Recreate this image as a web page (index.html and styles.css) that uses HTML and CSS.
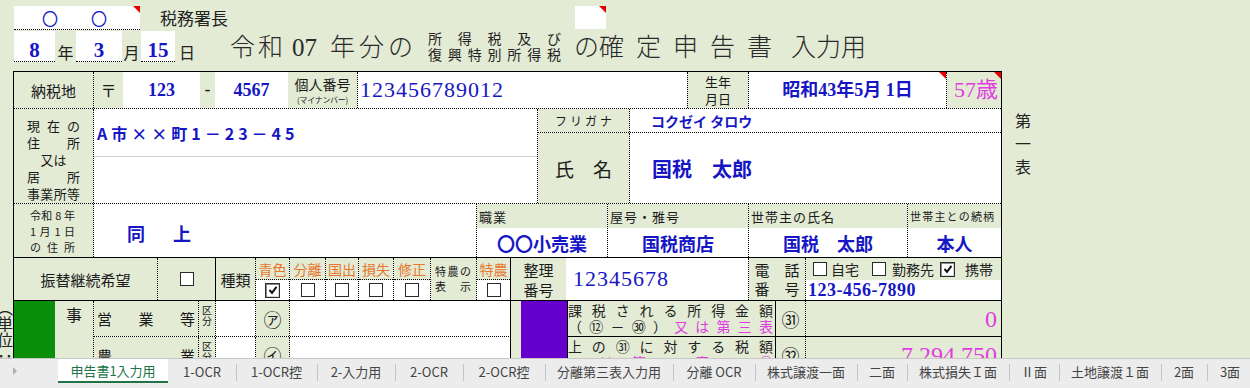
FILE: index.html
```html
<!DOCTYPE html>
<html lang="ja">
<head>
<meta charset="utf-8">
<title>確定申告書 入力用</title>
<link rel="stylesheet" href="styles.css">
</head>
<body>
<div class="screen">
  <header class="head">
    <div class="head-r1">
      <div class="inp office"><span>〇</span><span>〇</span><i class="tri"></i></div>
      <div class="chief">税務署長</div>
      <div class="inp memo"><i class="tri"></i></div>
    </div>
    <div class="head-r2">
      <div class="inp dnum d-yy">8</div><span class="du du-y">年</span>
      <div class="inp dnum d-mm">3</div><span class="du du-m">月</span>
      <div class="inp dnum d-dd">15</div><span class="du du-d">日</span>
      <h1 class="title">
        <span class="t-a">令和</span><span class="t-num">07</span><span class="t-b">年分の</span>
        <span class="t-small"><span class="ts">所得税及び</span><span class="ts">復興特別所得税</span></span>
        <span class="t-c">の</span><span class="t-e">確定申告書</span><span class="t-d">入力用</span>
      </h1>
    </div>
  </header>

  <div class="main">
    <div class="unit-strip"><span class="unit">（単位：円）</span></div>

    <div class="form">
      <div class="row r1">
        <div class="cell g dr c-nozei">納税地</div>
        <div class="cell g c-post">〒</div>
        <div class="cell w c-zip1 serif blue b">123</div>
        <div class="cell g c-dash">-</div>
        <div class="cell w c-zip2 serif blue b">4567</div>
        <div class="cell col g dr c-myl"><span class="my1">個人番号</span><span class="my2">(マイナンバー)</span></div>
        <div class="cell w c-my serif blue">123456789012</div>
        <div class="cell col g dl dr c-bl"><span>生年</span><span>月日</span></div>
        <div class="cell w dr c-bv serif blue b">昭和43年5月 1日<i class="tri"></i></div>
        <div class="cell g c-age serif">57歳<i class="tri"></i></div>
      </div>

      <div class="row r2">
        <div class="g dr c-lab5">
          <div class="jl">現在の</div>
          <div class="jl">住所</div>
          <div class="cl">又は</div>
          <div class="jl">居所</div>
          <div class="jl">事業所等</div>
        </div>
        <div class="w dr c-addr">
          <div class="addr1 blue b">A市××町1－23－45</div>
          <div class="addr2"></div>
        </div>
        <div class="c-namebox">
          <div class="kana-row">
            <div class="cell g dr c-kl">フリガナ</div>
            <div class="cell w c-kv blue b">コクゼイ タロウ</div>
          </div>
          <div class="name-row">
            <div class="cell g dr c-nl">氏　名</div>
            <div class="cell w c-nv blue b">国税　太郎</div>
          </div>
        </div>
      </div>

      <div class="row r3">
        <div class="g dr c-lab3">
          <div class="jl3">令和 8 年</div>
          <div class="jl3">1 月 1 日</div>
          <div class="jl3">の 住 所</div>
        </div>
        <div class="w dr c-same blue b">同　上</div>
        <div class="icol dr i1"><div class="ihead">職業</div><div class="ival blue b">〇〇小売業</div></div>
        <div class="icol dr i2"><div class="ihead">屋号・雅号</div><div class="ival blue b">国税商店</div></div>
        <div class="icol dr i3"><div class="ihead">世帯主の氏名</div><div class="ival blue b">国税　太郎</div></div>
        <div class="icol i4"><div class="ihead ihead-s">世帯主との続柄</div><div class="ival blue b">本人</div></div>
      </div>

      <div class="row r4">
        <div class="cell g dr c-furi">振替継続希望</div>
        <div class="cell g sr c-furicb"><span class="cb"></span></div>
        <div class="cell g dr c-kind">種類</div>
        <div class="kcol dr k1"><div class="khead">青色</div><div class="kbox"><span class="cb on"><svg viewBox="0 0 10 10" width="10" height="10"><polyline points="1.5,5 4,7.8 8.5,1.8" fill="none" stroke="#111" stroke-width="2"/></svg></span></div></div>
        <div class="kcol dr k2"><div class="khead">分離</div><div class="kbox"><span class="cb"></span></div></div>
        <div class="kcol dr k3"><div class="khead">国出</div><div class="kbox"><span class="cb"></span></div></div>
        <div class="kcol dr k4"><div class="khead">損失</div><div class="kbox"><span class="cb"></span></div></div>
        <div class="kcol dr k5"><div class="khead">修正</div><div class="kbox"><span class="cb"></span></div></div>
        <div class="g dr c-tokuhyo"><div class="jl4">特農の</div><div class="jl4">表示</div></div>
        <div class="kcol sr k6"><div class="khead">特農</div><div class="kbox"><span class="cb"></span></div></div>
        <div class="cell col g c-seiri"><span>整理</span><span>番号</span></div>
        <div class="cell w dr c-seirino serif blue">12345678</div>
        <div class="cell col g dr c-tel"><span>電　話</span><span>番　号</span></div>
        <div class="c-telv">
          <div class="tel-opts">
            <span class="cb"></span><span class="opt opt1">自宅</span>
            <span class="cb"></span><span class="opt opt2">勤務先</span>
            <span class="cb on"><svg viewBox="0 0 10 10" width="10" height="10"><polyline points="1.5,5 4,7.8 8.5,1.8" fill="none" stroke="#111" stroke-width="2"/></svg></span><span class="opt opt3">携帯</span>
          </div>
          <div class="tel-no serif blue b">123-456-7890</div>
        </div>
      </div>

      <div class="row r56">
        <div class="dkg"></div>
        <div class="g dr c-jigyo"><span>事</span><span>業</span></div>
        <div class="sub">
          <div class="srow">
            <div class="g dr c-item"><span class="jw">営業等</span></div>
            <div class="g dr c-kbn"><span>区</span><span>分</span></div>
            <div class="w dr c-kin"></div>
            <div class="cell g dr c-code">㋐</div>
            <div class="w sr c-amt"></div>
          </div>
          <div class="srow">
            <div class="g dr c-item"><span class="jw">農業</span></div>
            <div class="g dr c-kbn"><span>区</span><span>分</span></div>
            <div class="w dr c-kin"></div>
            <div class="cell g dr c-code">㋑</div>
            <div class="w sr c-amt"></div>
          </div>
        </div>
        <div class="g c-strip"></div>
        <div class="pur sr"></div>
        <div class="rgrp">
          <div class="rrow">
            <div class="g sr c-desc"><div class="jd">課税される所得金額</div><div class="jd">（⑫－㉚）<span class="mg">又は第三表</span></div></div>
            <div class="cell g dr c-no">㉛</div>
            <div class="g c-val serif mg">0</div>
          </div>
          <div class="rrow">
            <div class="g sr c-desc"><div class="jd">上の㉛に対する税額</div><div class="jd mg">又は第三表の⑯</div></div>
            <div class="cell g dr c-no">㉜</div>
            <div class="g c-val serif mg">7,294,750</div>
          </div>
        </div>
      </div>
    </div>

    <div class="side">第一表</div>
  </div>
</div>

<nav class="tabs">
  <span class="tab-nav"><i class="arrow"></i></span>
  <span class="tab active">申告書1入力用</span>
  <span class="tab tw68">1-OCR</span>
  <span class="tab tw81">1-OCR控</span>
  <span class="tab tw78">2-入力用</span>
  <span class="tab tw68">2-OCR</span>
  <span class="tab tw82">2-OCR控</span>
  <span class="tab tw128">分離第三表入力用</span>
  <span class="tab tw82">分離 OCR</span>
  <span class="tab tw102">株式譲渡一面</span>
  <span class="tab tw50">二面</span>
  <span class="tab tw102">株式損失Ｉ面</span>
  <span class="tab tw50">Ⅱ面</span>
  <span class="tab tw102">土地譲渡１面</span>
  <span class="tab tw46">2面</span>
  <span class="tab tw46">3面</span>
</nav>
</body>
</html>
```

FILE: styles.css
```css
* { box-sizing: border-box; margin: 0; padding: 0; }
html, body { width: 1250px; height: 388px; overflow: hidden; }
body {
  background: #e3ebd5;
  font-family: "Noto Sans CJK JP", "Noto Sans", sans-serif;
  color: #1a1a1a;
  font-size: 14px;
  line-height: 1;
}
.screen { height: 358px; overflow: hidden; }

.serif { font-family: "Liberation Serif", "Noto Sans CJK JP", serif; }
.blue { color: #1616c4; }
.mg { color: #e03ce0; }
.b { font-weight: bold; }

.tri {
  position: absolute; top: 0; right: 0; width: 0; height: 0;
  border-top: 7px solid #e80000; border-left: 7px solid transparent;
}

/* ---------- header ---------- */
.head-r1 { display: flex; padding-top: 6px; height: 30px; }
.inp { background: #fff; position: relative; }
.office {
  margin-left: 14px; width: 126px; height: 24px;
  border-bottom: 1px dotted #000;
  display: flex; align-items: center; padding-left: 28px; gap: 33px;
  color: #1616c4; font-size: 16px;
}
.chief { width: 435px; padding-left: 20px; font-size: 17px; padding-top: 3px; color: #222; }
.memo { width: 31px; height: 23px; }

.head-r2 { display: flex; align-items: flex-end; height: 32px; }
.dnum {
  height: 31px; border-bottom: 1px dotted #000;
  display: flex; align-items: center; justify-content: center;
  font-family: "Liberation Serif", serif; font-weight: bold; font-size: 21px; color: #1616c4;
  padding-top: 8px;
}
.d-yy { margin-left: 14px; width: 41px; }
.d-mm { width: 46px; }
.d-dd { width: 34px; }
.du { font-size: 16px; height: 31px; display: flex; align-items: center; padding-top: 10px; color: #222; }
.du-y { width: 21px; justify-content: center; }
.du-m { width: 19px; justify-content: center; }
.du-d { width: 25px; padding-left: 4px; }

.title {
  display: flex; align-items: flex-end; margin-left: 30px;
  font-family: "Liberation Serif", "Noto Sans CJK JP", serif;
  font-weight: 300; font-size: 25px; line-height: 29px; color: #2a2a2a;
  height: 32px;
}
.t-a { letter-spacing: 3px; }
.t-num { margin-left: 6px; font-weight: normal; }
.t-b { margin-left: 13px; letter-spacing: 4px; }
.t-small {
  display: flex; flex-direction: column; width: 133px; margin-left: 11px;
  font-size: 14px; line-height: 16px; font-family: "Noto Sans CJK JP", sans-serif; font-weight: normal;
  color: #222; align-self: flex-end;
}
.ts { display: block; text-align: justify; text-align-last: justify; }
.t-c { margin-left: 13px; }
.t-e { letter-spacing: 12px; }
.t-d { margin-left: 7px; }

/* ---------- main ---------- */
.main { display: flex; margin-top: 9px; }
.unit-strip { width: 13px; overflow: hidden; padding-top: 229px; }
.unit {
  display: block; writing-mode: vertical-rl; font-size: 16px; margin-left: -4px; width: 17px;
  color: #222;
}
.side {
  writing-mode: vertical-rl; font-size: 16px; letter-spacing: 7px;
  margin-left: 13px; padding-top: 42px; color: #222;
}

.form { width: 989px; border: 1px solid #000; background: #fff; flex-shrink: 0; }
.row { display: flex; }
.cell { display: flex; align-items: center; justify-content: center; position: relative; }
.col { flex-direction: column; }
.g { background: #e3ebd5; }
.w { background: #fff; }
.dr { border-right: 1px dotted #000; }
.dl { border-left: 1px dotted #000; }
.sr { border-right: 1px solid #000; }

/* row 1 */
.r1 { height: 37px; border-bottom: 1px dotted #000; }
.c-nozei { width: 80px; font-size: 15px; }
.c-post { width: 29px; font-size: 16px; }
.c-zip1 { width: 77px; font-size: 18px; }
.c-dash { width: 15px; font-family: "Liberation Sans", sans-serif; font-size: 18px; }
.c-zip2 { width: 73px; font-size: 18px; }
.c-myl { width: 70px; }
.my1 { font-size: 14px; }
.my2 { font-size: 8px; margin-top: 5px; letter-spacing: -0.3px; }
.c-my { width: 329px; justify-content: flex-start; padding-left: 2px; font-size: 22px; letter-spacing: 1px; }
.c-bl { width: 62px; font-size: 13px; gap: 4px; }
.c-bv { width: 198px; font-size: 18px; }
.c-age { width: 54px; justify-content: flex-end; padding-right: 3px; font-size: 22px; color: #e03ce0; }

/* row 2 */
.r2 { height: 95px; border-bottom: 1px dotted #000; }
.c-lab5 { width: 80px; padding: 8px 0 0 13px; font-size: 13px; line-height: 17px; }
.jl { width: 53px; white-space: nowrap; text-align: justify; text-align-last: justify; }
.cl { width: 53px; text-align: center; }
.c-addr { width: 444px; display: flex; flex-direction: column; }
.addr1 {
  height: 48px; border-bottom: 1px solid #d0d0d0;
  display: flex; align-items: center; padding-left: 3px;
  font-size: 16px; letter-spacing: 4px;
}
.c-namebox { width: 463px; display: flex; flex-direction: column; }
.kana-row { height: 24px; display: flex; border-bottom: 1px dotted #000; }
.c-kl { width: 92px; font-size: 12px; letter-spacing: 3px; padding-left: 3px; }
.c-kv { width: 371px; justify-content: flex-start; padding-left: 21px; font-size: 14px; }
.name-row { flex: 1; display: flex; }
.c-nl { width: 92px; font-size: 19px; }
.c-nv { width: 371px; justify-content: flex-start; padding-left: 22px; font-size: 20px; padding-top: 1px; }

/* row 3 */
.r3 { height: 54px; border-bottom: 1px solid #000; }
.c-lab3 { width: 80px; padding: 3px 0 0 16px; font-size: 11px; line-height: 16px; }
.jl3 { width: 45px; white-space: nowrap; text-align: justify; text-align-last: justify; }
.c-same {
  width: 383px; display: flex; align-items: center; padding: 4px 0 0 33px;
  font-size: 18px; letter-spacing: 5px;
}
.icol { display: flex; flex-direction: column; }
.i1 { width: 131px; }
.i2 { width: 141px; }
.i3 { width: 159px; }
.i4 { width: 93px; }
.ihead {
  height: 24px; background: #e3ebd5; font-size: 13px; letter-spacing: 1px;
  display: flex; align-items: center; padding-left: 2px; white-space: nowrap;
}
.ihead-s { font-size: 11px; letter-spacing: 1.2px; }
.ival { flex: 1; background: #fff; display: flex; align-items: center; justify-content: center; font-size: 18px; }

/* row 4 */
.r4 { height: 43px; border-bottom: 1px solid #000; }
.c-furi { width: 144px; font-size: 15px; }
.c-furicb { width: 58px; }
.c-kind { width: 40px; font-size: 15px; }
.kcol { display: flex; flex-direction: column; }
.k1 { width: 34px; }
.k2 { width: 36px; }
.k3 { width: 33px; }
.k4 { width: 35px; }
.k5 { width: 37px; }
.k6 { width: 34px; }
.khead {
  height: 22px; background: #e3ebd5; border-bottom: 1px dotted #000;
  display: flex; align-items: center; justify-content: center;
  font-size: 14px; color: #e8762d; white-space: nowrap;
}
.kbox { flex: 1; background: #fff; display: flex; align-items: center; justify-content: center; }
.cb {
  display: inline-flex; align-items: center; justify-content: center;
  width: 14px; height: 14px; border: 1px solid #2a2a2a; background: #fff; flex-shrink: 0;
}
.cb.on { width: 15px; height: 15px; box-shadow: inset 1px 1px 0 #8a8a8a, inset -1px -1px 0 #d8d8d8; }
.c-tokuhyo { width: 46px; padding: 6px 0 0 4px; font-size: 11px; line-height: 15px; }
.jl4 { width: 36px; white-space: nowrap; text-align: justify; text-align-last: justify; }
.c-seiri { width: 55px; font-size: 15px; gap: 5px; }
.c-seirino { width: 183px; justify-content: flex-start; padding-left: 7px; font-size: 22px; letter-spacing: 1px; }
.c-tel { width: 57px; font-size: 15px; gap: 4px; }
.c-telv { width: 195px; display: flex; flex-direction: column; }
.tel-opts { height: 22px; background: #e3ebd5; display: flex; align-items: center; padding-left: 7px; font-size: 14px; }
.opt { color: #222; }
.opt1 { margin: 0 13px 0 4px; }
.opt2 { margin: 0 6px 0 6px; }
.opt3 { margin-left: 10px; }
.tel-no { flex: 1; background: #fff; display: flex; align-items: center; padding-left: 2px; font-size: 18px; letter-spacing: 0.5px; }

/* rows 5-6 */
.r56 { height: 72px; }
.dkg { width: 41px; background: #0a8f0a; }
.c-jigyo {
  width: 39px; display: flex; flex-direction: column; align-items: center; justify-content: space-between;
  font-size: 16px; padding: 5px 0 0;
}
.sub { width: 417px; display: flex; flex-direction: column; }
.srow { height: 36px; display: flex; border-bottom: 1px dotted #000; }
.srow:last-child { border-bottom: none; }
.c-item { width: 105px; display: flex; align-items: center; padding: 0 3px 0 3px; font-size: 15px; }
.jw { display: block; width: 100%; text-align: justify; text-align-last: justify; }
.c-kbn { width: 17px; display: flex; flex-direction: column; align-items: center; font-size: 10px; line-height: 11px; padding-top: 3px; }
.c-kin { width: 40px; }
.c-code { width: 34px; font-size: 18px; }
.c-amt { width: 221px; }
.c-strip { width: 10px; }
.pur { width: 47px; background: #6600cc; }
.rgrp { width: 433px; display: flex; flex-direction: column; }
.rrow { height: 36px; display: flex; border-bottom: 1px solid #000; }
.c-desc { width: 208px; padding: 1px 2px 0 0; font-size: 14px; line-height: 16px; color: #222; }
.jd { text-align: justify; text-align-last: justify; white-space: nowrap; }
.c-no { width: 30px; font-size: 18px; }
.c-val { width: 195px; display: flex; align-items: center; justify-content: flex-end; padding-right: 4px; font-size: 24px; }

/* ---------- tabs ---------- */
.tabs {
  height: 30px; background: #ececec; border-top: 1px solid #c8c8c8;
  display: flex; align-items: flex-start; font-size: 13px; color: #444;
}
.tab-nav { width: 58px; height: 24px; display: flex; align-items: center; padding-left: 13px; flex-shrink: 0; }
.arrow {
  width: 0; height: 0; border-left: 4px solid #b0b0b0;
  border-top: 4px solid transparent; border-bottom: 4px solid transparent;
}
.tab {
  position: relative; height: 24px; display: flex; align-items: center; justify-content: center;
  white-space: nowrap; flex-shrink: 0;
}
.tab.active {
  background: #fff; color: #217346; border-bottom: 2px solid #217346; width: 110px;
}
.tw46 { width: 46px; }
.tw50 { width: 50px; }
.tw68 { width: 68px; }
.tw78 { width: 78px; }
.tw81 { width: 81px; }
.tw82 { width: 82px; }
.tw102 { width: 102px; }
.tw128 { width: 128px; }
.tab:not(.active) + .tab::before {
  content: ""; position: absolute; left: 0; top: 5px; width: 1px; height: 17px; background: #c4c4c4;
}
```
